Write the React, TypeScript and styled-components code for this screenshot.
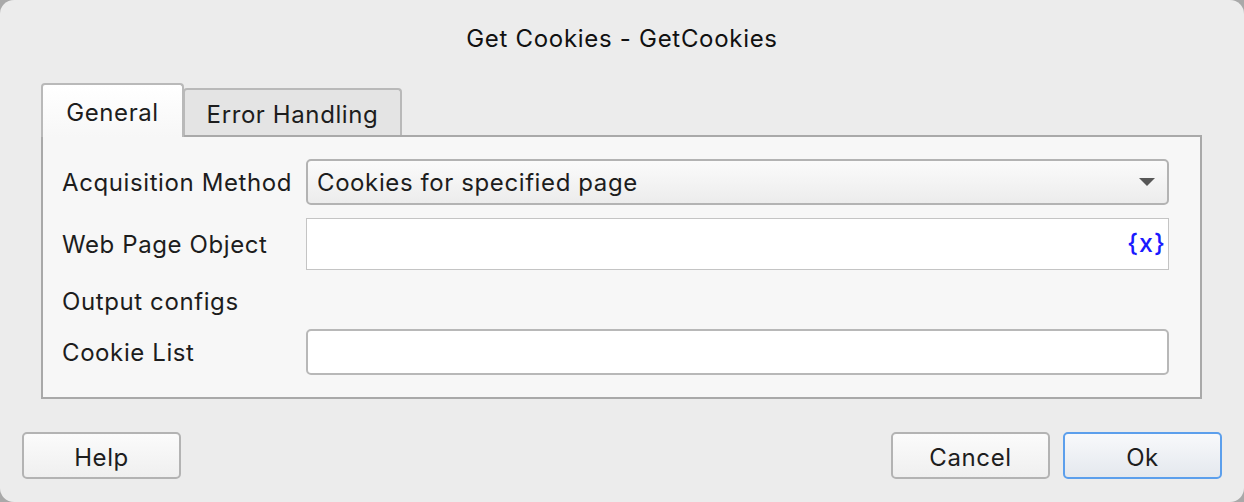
import React from "react";
import styled, { createGlobalStyle } from "styled-components";

const GlobalStyle = createGlobalStyle`
  html, body {
    margin: 0;
    padding: 0;
    background: #a9a9a9;
  }
  body {
    font-family: Inter, "Liberation Sans", sans-serif;
  }
`;

const Window = styled.div`
  width: 1244px;
  height: 502px;
  box-sizing: border-box;
  background: #ececec;
  border-radius: 14px;
  display: flex;
  flex-direction: column;
  color: #1d1d1d;
  font-size: 24px;
  letter-spacing: 0.6px;
  overflow: hidden;
`;

const Title = styled.div`
  height: 84px;
  box-sizing: border-box;
  padding-top: 25px;
  line-height: 28px;
  text-align: center;
  color: #111;
  letter-spacing: 0.7px;
`;

const Body = styled.div`
  padding: 0 42px 0 41px;
`;

const TabBar = styled.div`
  display: flex;
  align-items: flex-end;
  height: 51px;
  position: relative;
  z-index: 1;
`;

const Tab = styled.div<{ active?: boolean }>`
  box-sizing: border-box;
  height: ${(p) => (p.active ? "54px" : "47px")};
  margin-bottom: ${(p) => (p.active ? "-2px" : "0")};
  border: 2px solid #b9b9b9;
  border-bottom: none;
  border-radius: 4px 4px 0 0;
  background: ${(p) =>
    p.active ? "linear-gradient(#ffffff, #f7f7f7)" : "#e4e4e4"};
  display: flex;
  align-items: center;
  justify-content: center;
  padding-top: ${(p) => (p.active ? "3px" : "3px")};
  width: ${(p) => (p.active ? "143px" : "219px")};
  margin-left: ${(p) => (p.active ? "0" : "-1px")};
`;

const Panel = styled.div`
  border: 2px solid #a9a9a9;
  background: #f7f7f7;
  height: 264px;
  box-sizing: border-box;
  padding: 22px 31px 0 19px;
  display: grid;
  grid-template-columns: 244px 1fr;
  grid-template-rows: 46px 52px 33px 46px;
  row-gap: 13px;
  align-items: center;
`;

const Label = styled.div<{ bottom?: boolean }>`
  align-self: ${(p) => (p.bottom ? "end" : "center")};
  line-height: 29px;
  white-space: nowrap;
`;

const Select = styled.div`
  height: 46px;
  box-sizing: border-box;
  border: 2px solid #b3b3b3;
  border-radius: 5px;
  background: linear-gradient(#fbfbfb, #ececec);
  display: flex;
  align-items: center;
  padding: 0 12px 0 9px;
`;

const SelectText = styled.span`
  flex: 1;
`;

const Caret = styled.span`
  width: 0;
  height: 0;
  border-left: 8px solid transparent;
  border-right: 8px solid transparent;
  border-top: 8px solid #575757;
`;

const TextBox = styled.div<{ tall?: boolean; round?: boolean }>`
  height: ${(p) => (p.tall ? "52px" : "46px")};
  box-sizing: border-box;
  background: #fff;
  border: ${(p) => (p.round ? "2px solid #b8b8b8" : "1px solid #c4c4c4")};
  border-radius: ${(p) => (p.round ? "5px" : "0")};
  display: flex;
  align-items: center;
  justify-content: flex-end;
  padding-right: 2px;
`;

const VarToken = styled.span`
  color: #1a1aff;
  font-size: 25px;
  font-weight: 500;
  letter-spacing: 1px;
  padding-bottom: 2px;
`;

const Footer = styled.div`
  display: flex;
  align-items: center;
  padding: 33px 22px 0 22px;
  gap: 13px;
`;

const Spacer = styled.div`
  flex: 1;
`;

const Button = styled.button<{ primary?: boolean }>`
  width: 159px;
  height: 47px;
  box-sizing: border-box;
  font: inherit;
  letter-spacing: inherit;
  color: #1d1d1d;
  border-radius: 5px;
  border: 2px solid ${(p) => (p.primary ? "#5c9fec" : "#b3b3b3")};
  background: ${(p) =>
    p.primary
      ? "linear-gradient(#f8f9fb, #e4e8ee)"
      : "linear-gradient(#fbfbfb, #efefef)"};
  padding: 3px 0 0;
  cursor: pointer;
`;

const App = () => {
  return (
    <>
      <GlobalStyle />
      <Window>
        <Title>Get Cookies - GetCookies</Title>
        <Body>
          <TabBar>
            <Tab active>General</Tab>
            <Tab>Error Handling</Tab>
          </TabBar>
          <Panel>
            <Label>Acquisition Method</Label>
            <Select>
              <SelectText>Cookies for specified page</SelectText>
              <Caret />
            </Select>
            <Label>Web Page Object</Label>
            <TextBox tall>
              <VarToken>{"{x}"}</VarToken>
            </TextBox>
            <Label bottom>Output configs</Label>
            <div />
            <Label>Cookie List</Label>
            <TextBox round />
          </Panel>
        </Body>
        <Footer>
          <Button>Help</Button>
          <Spacer />
          <Button>Cancel</Button>
          <Button primary>Ok</Button>
        </Footer>
      </Window>
    </>
  );
};

export default App;
